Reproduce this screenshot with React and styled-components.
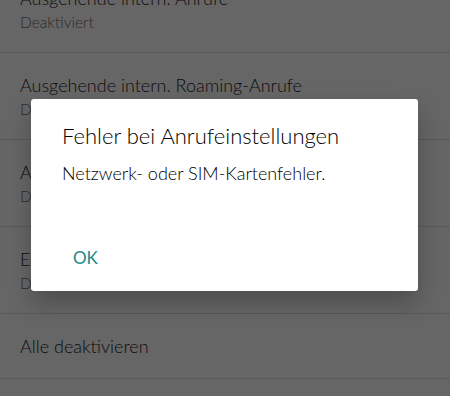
import React from "react";
import styled, { createGlobalStyle } from "styled-components";

const Global = createGlobalStyle`
  html, body { margin: 0; padding: 0; }
  body { font-family: Lato, "Open Sans", sans-serif; background: #fff; }
`;

const Screen = styled.div`
  position: relative;
  width: 450px;
  height: 396px;
  overflow: hidden;
  background: #ffffff;
`;

const List = styled.ul`
  list-style: none;
  margin: -34px 0 0 0;
  padding: 0;
`;

const Row = styled.li`
  display: flex;
  flex-direction: column;
  justify-content: center;
  box-sizing: border-box;
  height: ${(p) => (p.$single ? "65px" : "87px")};
  padding: 0 20px;
  border-bottom: 1px solid #dedede;
`;

const RowTitle = styled.div`
  font-size: 18px;
  font-weight: 300;
  line-height: 26px;
  color: #1e1e1e;
  white-space: nowrap;
`;

const RowSub = styled.div`
  font-size: 15.5px;
  font-weight: 300;
  line-height: 22px;
  color: #6e6e6e;
`;

const Scrim = styled.div`
  position: absolute;
  inset: 0;
  background: rgba(0, 0, 0, 0.6);
`;

const Dialog = styled.div`
  position: absolute;
  left: 31px;
  top: 99px;
  width: 387px;
  height: 192px;
  box-sizing: border-box;
  background: #fff;
  border-radius: 3px;
  box-shadow: 0 12px 24px rgba(0, 0, 0, 0.25);
  padding: 22px 31px 0 31px;
  display: flex;
  flex-direction: column;
`;

const DialogTitle = styled.h2`
  margin: 0;
  font-size: 22px;
  font-weight: 300;
  line-height: 30px;
  color: #000;
`;

const DialogBody = styled.p`
  margin: 10px 0 0 0;
  font-size: 18px;
  font-weight: 300;
  line-height: 24px;
  color: #000;
`;

const Actions = styled.div`
  margin-top: auto;
  padding-bottom: 15px;
  display: flex;
`;

const TextButton = styled.button`
  border: none;
  background: transparent;
  padding: 8px 12px;
  margin-left: -1px;
  font-family: inherit;
  font-size: 17px;
  font-weight: 400;
  line-height: 20px;
  color: #1d8a84;
  cursor: pointer;
`;

const items = [
  { title: "Ausgehende intern. Anrufe", sub: "Deaktiviert" },
  { title: "Ausgehende intern. Roaming-Anrufe", sub: "Deaktiviert" },
  { title: "Ankommende Anrufe", sub: "Deaktiviert" },
  { title: "Eingehende Anrufe beim Roaming", sub: "Deaktiviert" },
];

export default function App() {
  return (
    <>
      <Global />
      <Screen>
        <List>
          {items.map((it) => (
            <Row key={it.title}>
              <RowTitle>{it.title}</RowTitle>
              <RowSub>{it.sub}</RowSub>
            </Row>
          ))}
          <Row $single>
            <RowTitle>Alle deaktivieren</RowTitle>
          </Row>
          <Row />
        </List>
        <Scrim />
        <Dialog role="dialog">
          <DialogTitle>Fehler bei Anrufeinstellungen</DialogTitle>
          <DialogBody>Netzwerk- oder SIM-Kartenfehler.</DialogBody>
          <Actions>
            <TextButton>OK</TextButton>
          </Actions>
        </Dialog>
      </Screen>
    </>
  );
}
